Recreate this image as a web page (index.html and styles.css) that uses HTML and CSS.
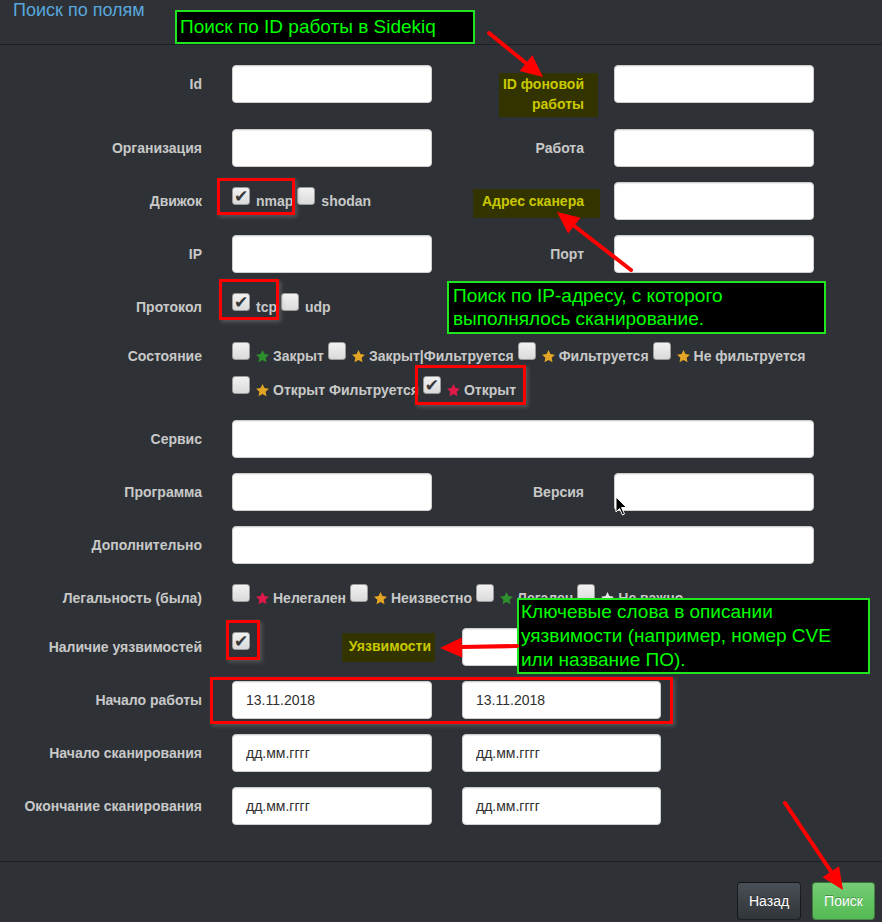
FILE: index.html
```html
<!DOCTYPE html>
<html lang="ru">
<head>
<meta charset="utf-8">
<title>Поиск по полям</title>
<link rel="stylesheet" href="styles.css">
</head>
<body>
<div class="page">
  <div class="modal-header"><h4 class="title">Поиск по полям</h4></div>

  <div class="modal-body">
    <div class="row">
      <label class="lbl">Id</label>
      <input class="fc" type="text">
      <label class="lbl"><span class="hl hl-id">ID фоновой<br>работы</span></label>
      <input class="fc" type="text">
    </div>

    <div class="row">
      <label class="lbl">Организация</label>
      <input class="fc" type="text">
      <label class="lbl">Работа</label>
      <input class="fc" type="text">
    </div>

    <div class="row">
      <label class="lbl">Движок</label>
      <div class="checks">
        <div class="line">
          <span class="opt"><span class="cb on"></span>nmap</span>
          <span class="opt"><span class="cb"></span>shodan</span>
        </div>
      </div>
      <label class="lbl"><span class="hl hl-addr">Адрес сканера</span></label>
      <input class="fc" type="text">
    </div>

    <div class="row">
      <label class="lbl">IP</label>
      <input class="fc" type="text">
      <label class="lbl">Порт</label>
      <input class="fc" type="text">
    </div>

    <div class="row">
      <label class="lbl">Протокол</label>
      <div class="checks span">
        <div class="line">
          <span class="opt"><span class="cb on"></span>tcp</span>
          <span class="opt"><span class="cb"></span>udp</span>
        </div>
      </div>
    </div>

    <div class="row">
      <label class="lbl">Состояние</label>
      <div class="checks span multi">
        <div class="line">
          <span class="opt"><span class="cb"></span><svg class="star s-g" viewBox="0 0 24 24"><path d="M12 1.5l3.1 6.6 7.2.9-5.3 5 1.4 7.1L12 17.6l-6.4 3.5 1.4-7.1-5.3-5 7.2-.9z"/></svg>Закрыт</span>
          <span class="opt"><span class="cb"></span><svg class="star s-y" viewBox="0 0 24 24"><path d="M12 1.5l3.1 6.6 7.2.9-5.3 5 1.4 7.1L12 17.6l-6.4 3.5 1.4-7.1-5.3-5 7.2-.9z"/></svg>Закрыт|Фильтруется</span>
          <span class="opt"><span class="cb"></span><svg class="star s-y" viewBox="0 0 24 24"><path d="M12 1.5l3.1 6.6 7.2.9-5.3 5 1.4 7.1L12 17.6l-6.4 3.5 1.4-7.1-5.3-5 7.2-.9z"/></svg>Фильтруется</span>
          <span class="opt"><span class="cb"></span><svg class="star s-y" viewBox="0 0 24 24"><path d="M12 1.5l3.1 6.6 7.2.9-5.3 5 1.4 7.1L12 17.6l-6.4 3.5 1.4-7.1-5.3-5 7.2-.9z"/></svg>Не фильтруется</span>
        </div>
        <div class="line">
          <span class="opt"><span class="cb"></span><svg class="star s-y" viewBox="0 0 24 24"><path d="M12 1.5l3.1 6.6 7.2.9-5.3 5 1.4 7.1L12 17.6l-6.4 3.5 1.4-7.1-5.3-5 7.2-.9z"/></svg>Открыт Фильтруется</span>
          <span class="opt"><span class="cb on"></span><svg class="star s-r" viewBox="0 0 24 24"><path d="M12 1.5l3.1 6.6 7.2.9-5.3 5 1.4 7.1L12 17.6l-6.4 3.5 1.4-7.1-5.3-5 7.2-.9z"/></svg>Открыт</span>
        </div>
      </div>
    </div>

    <div class="row">
      <label class="lbl">Сервис</label>
      <input class="fc span" type="text">
    </div>

    <div class="row">
      <label class="lbl">Программа</label>
      <input class="fc" type="text">
      <label class="lbl">Версия</label>
      <input class="fc" type="text">
    </div>

    <div class="row">
      <label class="lbl">Дополнительно</label>
      <input class="fc span" type="text">
    </div>

    <div class="row">
      <label class="lbl">Легальность (была)</label>
      <div class="checks span">
        <div class="line">
          <span class="opt"><span class="cb"></span><svg class="star s-r" viewBox="0 0 24 24"><path d="M12 1.5l3.1 6.6 7.2.9-5.3 5 1.4 7.1L12 17.6l-6.4 3.5 1.4-7.1-5.3-5 7.2-.9z"/></svg>Нелегален</span>
          <span class="opt"><span class="cb"></span><svg class="star s-y" viewBox="0 0 24 24"><path d="M12 1.5l3.1 6.6 7.2.9-5.3 5 1.4 7.1L12 17.6l-6.4 3.5 1.4-7.1-5.3-5 7.2-.9z"/></svg>Неизвестно</span>
          <span class="opt"><span class="cb"></span><svg class="star s-g" viewBox="0 0 24 24"><path d="M12 1.5l3.1 6.6 7.2.9-5.3 5 1.4 7.1L12 17.6l-6.4 3.5 1.4-7.1-5.3-5 7.2-.9z"/></svg>Легален</span>
          <span class="opt"><span class="cb"></span><svg class="star s-w" viewBox="0 0 24 24"><path d="M12 1.5l3.1 6.6 7.2.9-5.3 5 1.4 7.1L12 17.6l-6.4 3.5 1.4-7.1-5.3-5 7.2-.9z"/></svg>Не важно</span>
        </div>
      </div>
    </div>

    <div class="row">
      <label class="lbl">Наличие уязвимостей</label>
      <div class="vuln">
        <span class="cb on"></span>
        <span class="hl hl-vuln">Уязвимости</span>
      </div>
      <input class="fc wide2" type="text">
    </div>

    <div class="row">
      <label class="lbl">Начало работы</label>
      <input class="fc" type="text" value="13.11.2018">
      <input class="fc wide2" type="text" value="13.11.2018">
    </div>

    <div class="row">
      <label class="lbl">Начало сканирования</label>
      <input class="fc" type="text" value="дд.мм.гггг">
      <input class="fc wide2" type="text" value="дд.мм.гггг">
    </div>

    <div class="row">
      <label class="lbl">Окончание сканирования</label>
      <input class="fc" type="text" value="дд.мм.гггг">
      <input class="fc wide2" type="text" value="дд.мм.гггг">
    </div>
  </div>

  <div class="modal-footer">
    <button class="btn btn-default" type="button">Назад</button>
    <button class="btn btn-success" type="button">Поиск</button>
  </div>

  <!-- annotations drawn over the screenshot -->
  <div class="note note-1">Поиск по ID работы в Sidekiq</div>
  <div class="note note-2">Поиск по IP-адресу, с которого<br>выполнялось сканирование.</div>
  <div class="note note-3">Ключевые слова в описании<br>уязвимости (например, номер CVE<br>или название ПО).</div>

  <div class="mark mark-nmap"></div>
  <div class="mark mark-tcp"></div>
  <div class="mark mark-open"></div>
  <div class="mark mark-vuln"></div>
  <div class="mark mark-dates"></div>

  <svg class="arrows" viewBox="0 0 882 922" width="882" height="922">
    <g class="arrow">
      <line x1="489" y1="33" x2="527" y2="64"/>
      <polygon points="543,77 519.6,70.9 532.3,55.3"/>
    </g>
    <g class="arrow">
      <line x1="631" y1="270" x2="573" y2="225"/>
      <polygon points="557,212 580.5,217.7 568.1,233.5"/>
    </g>
    <g class="arrow">
      <line x1="517" y1="646" x2="461" y2="647"/>
      <polygon points="440,648 461.7,637.4 462.3,657.4"/>
    </g>
    <g class="arrow">
      <line x1="785" y1="803" x2="832" y2="873"/>
      <polygon points="843,890 822.5,877.2 839.1,866.2"/>
    </g>
  </svg>

  <svg class="cursor" viewBox="0 0 13 21" width="13" height="21">
    <path d="M1 1 L1 16 L4.5 12.5 L7.5 19 L9.5 18 L6.5 11.5 L11.5 11.5 Z"/>
  </svg>
</div>
</body>
</html>
```

FILE: styles.css
```css
html, body {
  margin: 0;
  padding: 0;
  background: #2e3236;
}

body {
  font-family: "Liberation Sans", Arial, sans-serif;
  font-size: 14px;
  line-height: 20px;
  color: #c8c8c8;
}

.page {
  position: relative;
  width: 882px;
  height: 922px;
  overflow: hidden;
}

/* header */
.modal-header {
  height: 44px;
  border-bottom: 1px solid #1d2023;
  padding: 0 13px;
}

.title {
  margin: 0;
  font-size: 18px;
  line-height: 20px;
  font-weight: normal;
  color: #58a6dc;
}

/* body */
.modal-body {
  padding: 20px 0 21px 0;
}

.row {
  display: grid;
  grid-template-columns: 187px 200px 122px 200px;
  column-gap: 30px;
  align-items: start;
  padding: 0 15px;
  margin-bottom: 15px;
}

.lbl {
  display: flex;
  justify-content: flex-end;
  align-items: flex-start;
  padding-top: 9px;
  font-weight: bold;
  text-align: right;
  color: #c8c8c8;
  white-space: nowrap;
}

.fc {
  box-sizing: border-box;
  width: 200px;
  height: 38px;
  margin: 0;
  padding: 6px 13px;
  border: 1px solid #cfcfcf;
  border-radius: 4px;
  background: #fff;
  box-shadow: inset 0 1px 1px rgba(0, 0, 0, 0.075);
  font-family: "Liberation Sans", Arial, sans-serif;
  font-size: 14px;
  color: #2f2f2f;
  outline: none;
}

.fc.span {
  grid-column: 2 / 5;
  width: 100%;
}

.fc.wide2 {
  grid-column: 3 / 5;
  width: 199px;
}

/* highlighted (annotated) labels */
.hl {
  display: block;
  background: #333300;
  color: #c9c900;
  font-weight: bold;
  text-align: right;
}

.hl-id {
  padding: 1px 14px 3px 4px;
  margin: -1px -14px -3px 0;
}

.hl-addr {
  padding: 2px 16px 7px 9px;
  margin: -2px -16px -9px 0;
}

.hl-vuln {
  padding: 3px 4px 6px 7px;
  margin: 5px -3px 0 0;
  line-height: 20px;
}

/* checkboxes */
.checks {
  padding: 9px 0 5px 0;
}

.checks.span {
  grid-column: 2 / 5;
}

.line {
  display: flex;
  height: 20px;
  white-space: nowrap;
}

.line + .line {
  margin-top: 14px;
}

.opt {
  display: inline-flex;
  align-items: flex-start;
  height: 20px;
  margin-right: 4px;
  font-weight: bold;
  color: #c8c8c8;
}

.cb {
  box-sizing: border-box;
  display: inline-block;
  width: 18px;
  height: 18px;
  margin: -4px 6px 0 0;
  border: 1px solid #9a9a9a;
  border-radius: 3px;
  background: linear-gradient(#f2f2f2, #dadada);
  position: relative;
  flex: none;
}

.cb.on::after {
  content: "\2714";
  position: absolute;
  left: 0;
  top: 0;
  width: 16px;
  height: 16px;
  font-family: "DejaVu Sans", sans-serif;
  font-size: 17px;
  line-height: 16px;
  text-align: center;
  color: #383838;
}

.star {
  width: 15px;
  height: 15px;
  margin: 3px 3px 0 -1px;
  flex: none;
  fill: currentColor;
}

.s-g { color: #2d8f2d; }
.s-y { color: #e3a524; }
.s-r { color: #e0194a; }
.s-w { color: #e6e6e6; }

.vuln {
  display: flex;
  justify-content: space-between;
  align-items: flex-start;
}

.vuln .cb {
  margin: 4px 0 0 0;
}

/* footer */
.modal-footer {
  border-top: 1px solid #1d2023;
  display: flex;
  justify-content: flex-end;
  gap: 11px;
  padding: 20px 7px 0 0;
}

.btn {
  box-sizing: border-box;
  height: 38px;
  padding: 8px 11px;
  border: 1px solid rgba(0, 0, 0, 0.6);
  border-radius: 4px;
  font-family: "Liberation Sans", Arial, sans-serif;
  font-size: 14px;
  line-height: 20px;
  color: #fff;
  text-shadow: 0 -1px 0 rgba(0, 0, 0, 0.3);
}

.btn-default {
  width: 64px;
  background: linear-gradient(#4a5057, #3a3f44 60%, #32363b);
}

.btn-success {
  width: 63px;
  border-color: rgba(0, 0, 0, 0.35);
  background: linear-gradient(#76cb76, #62c462 50%, #55b955);
}

/* annotations */
.note {
  position: absolute;
  box-sizing: border-box;
  background: #000;
  border: 2px solid #1fe61f;
  color: #00ff00;
  font-family: "Liberation Sans", Arial, sans-serif;
  font-size: 19px;
  white-space: nowrap;
}

.note-1 {
  left: 175px;
  top: 10px;
  width: 300px;
  height: 34px;
  padding: 0 3px;
  line-height: 30px;
}

.note-2 {
  left: 447px;
  top: 281px;
  width: 379px;
  height: 53px;
  padding: 1px 4px 0;
  line-height: 23px;
}

.note-3 {
  left: 517px;
  top: 598px;
  width: 353px;
  height: 76px;
  padding: 0 2px;
  line-height: 24px;
}

.mark {
  position: absolute;
  box-sizing: border-box;
  border: 3px solid #ff0000;
  box-shadow: 2px 2px 4px rgba(120, 120, 120, 0.55);
}

.mark-nmap  { left: 217px; top: 178px; width: 78px;  height: 37px; }
.mark-tcp   { left: 219px; top: 279px; width: 60px;  height: 41px; }
.mark-open  { left: 415px; top: 365px; width: 111px; height: 40px; }
.mark-vuln  { left: 226px; top: 620px; width: 34px;  height: 40px; }
.mark-dates { left: 210px; top: 677px; width: 463px; height: 47px; }

.arrows {
  position: absolute;
  left: 0;
  top: 0;
  pointer-events: none;
}

.arrow line {
  stroke: #ff0000;
  stroke-width: 4;
  stroke-linecap: round;
}

.arrow polygon {
  fill: #ff0000;
}

.cursor {
  position: absolute;
  left: 615px;
  top: 496px;
}

.cursor path {
  fill: #000;
  stroke: #fff;
  stroke-width: 1;
  stroke-linejoin: round;
}
```
